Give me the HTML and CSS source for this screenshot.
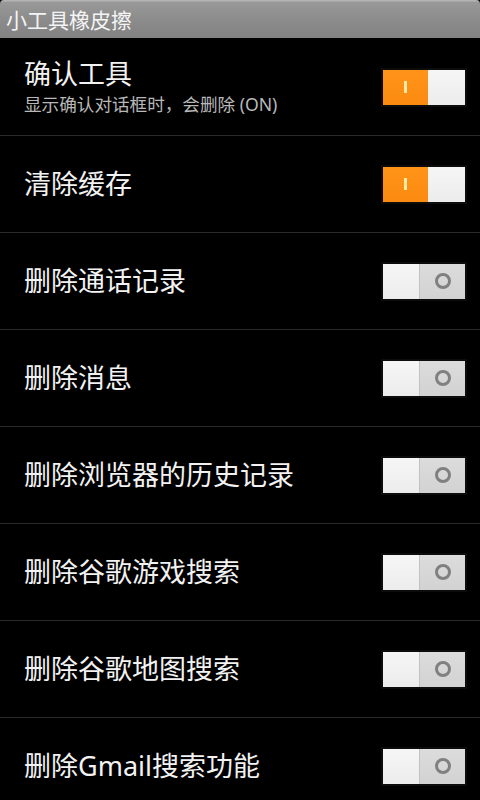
FILE: index.html
```html
<!DOCTYPE html>
<html>
<head>
<meta charset="utf-8">
<link rel="stylesheet" href="styles.css">
</head>
<body>
<div class="titlebar">小工具橡皮擦</div>
<div class="list">
  <div class="row">
    <div class="texts">
      <div class="label">确认工具</div>
      <div class="sub">显示确认对话框时，会删除 (ON)</div>
    </div>
    <div class="toggle on"><div class="thumb"><span class="bar"></span></div><div class="track"></div></div>
  </div>
  <div class="row">
    <div class="texts"><div class="label">清除缓存</div></div>
    <div class="toggle on"><div class="thumb"><span class="bar"></span></div><div class="track"></div></div>
  </div>
  <div class="row">
    <div class="texts"><div class="label">删除通话记录</div></div>
    <div class="toggle off"><div class="track"></div><div class="thumb"><span class="ring"></span></div></div>
  </div>
  <div class="row">
    <div class="texts"><div class="label">删除消息</div></div>
    <div class="toggle off"><div class="track"></div><div class="thumb"><span class="ring"></span></div></div>
  </div>
  <div class="row">
    <div class="texts"><div class="label">删除浏览器的历史记录</div></div>
    <div class="toggle off"><div class="track"></div><div class="thumb"><span class="ring"></span></div></div>
  </div>
  <div class="row">
    <div class="texts"><div class="label">删除谷歌游戏搜索</div></div>
    <div class="toggle off"><div class="track"></div><div class="thumb"><span class="ring"></span></div></div>
  </div>
  <div class="row">
    <div class="texts"><div class="label">删除谷歌地图搜索</div></div>
    <div class="toggle off"><div class="track"></div><div class="thumb"><span class="ring"></span></div></div>
  </div>
  <div class="row">
    <div class="texts"><div class="label">删除Gmail搜索功能</div></div>
    <div class="toggle off"><div class="track"></div><div class="thumb"><span class="ring"></span></div></div>
  </div>
</div>
</body>
</html>
```
FILE: styles.css
```css
html, body {
  margin: 0;
  padding: 0;
  background: #000;
  width: 480px;
  height: 800px;
  overflow: hidden;
  font-family: "Noto Sans", "Noto Sans CJK SC", sans-serif;
}
.titlebar {
  height: 38px;
  box-sizing: border-box;
  padding-left: 6px;
  display: flex;
  align-items: center;
  color: #f4f4f4;
  font-size: 21px;
  background: linear-gradient(#b4b4b4 0, #b4b4b4 1px, #999 2px, #8c8c8c 50%, #828282 100%);
  border-radius: 4px 4px 0 0;
  margin-bottom: 1px;
}
.list {
  display: flex;
  flex-direction: column;
}
.row {
  height: 97px;
  flex: 0 0 97px;
  box-sizing: border-box;
  border-bottom: 1px solid #2a2a2a;
  display: flex;
  align-items: center;
  padding: 0 15px 0 24px;
}
.texts {
  flex: 1;
  display: flex;
  flex-direction: column;
}
.label {
  color: #f2f2f2;
  font-size: 27px;
  line-height: 30px;
}
.sub {
  color: #b8b8b8;
  font-size: 17.6px;
  line-height: 22px;
  margin-top: 4px;
}
.toggle {
  width: 82px;
  height: 35px;
  display: flex;
  box-shadow: 0 0 0 2px #0c0c0c;
}
.toggle.on .thumb {
  width: 45px;
  background: linear-gradient(#ff9419, #fb8a10);
  display: flex;
  align-items: center;
  justify-content: center;
}
.toggle.on .track {
  flex: 1;
  background: linear-gradient(#f6f6f6, #ececec);
}
.bar {
  width: 3px;
  height: 12px;
  background: #ffe9a6;
}
.toggle.off .track {
  width: 36px;
  background: linear-gradient(#f6f6f6, #ececec);
  border-right: 1px solid #c2c2c2;
}
.toggle.off .thumb {
  flex: 1;
  background: linear-gradient(#dcdcdc, #d2d2d2);
  display: flex;
  align-items: center;
  justify-content: center;
}
.ring {
  width: 10px;
  height: 10px;
  border: 3px solid #808080;
  border-radius: 50%;
}
```
